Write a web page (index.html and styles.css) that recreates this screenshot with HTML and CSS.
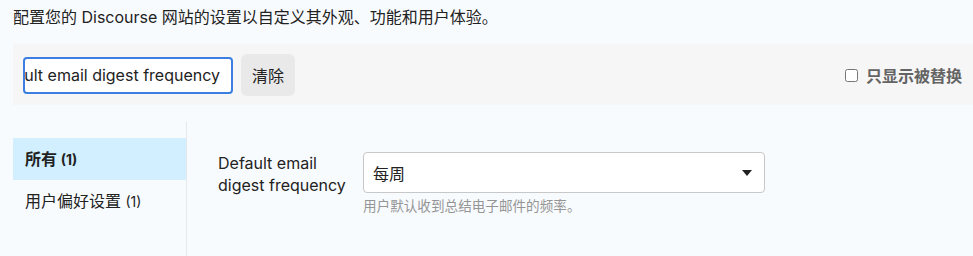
FILE: index.html
```html
<!DOCTYPE html>
<html lang="zh-CN">
<head>
<meta charset="utf-8">
<title>设置</title>
<link rel="stylesheet" href="styles.css">
</head>
<body>
<div class="page">
  <p class="intro">配置您的 Discourse 网站的设置以自定义其外观、功能和用户体验。</p>
  <div class="filter-bar">
    <div class="search-input"><span>Default email digest frequency</span></div>
    <button class="clear-btn" type="button">清除</button>
    <label class="overridden">
      <input type="checkbox">
      <span>只显示被替换</span>
    </label>
  </div>
  <div class="settings">
    <nav class="side-nav">
      <a class="nav-item active">所有 <span class="count">(1)</span></a>
      <a class="nav-item">用户偏好设置 <span class="count">(1)</span></a>
    </nav>
    <div class="content">
      <div class="setting-row">
        <div class="setting-label">Default email digest frequency</div>
        <div class="setting-value">
          <div class="select-box">
            <span>每周</span>
            <svg class="caret" width="10" height="6" viewBox="0 0 10 6"><path d="M0 0H10L5 6Z" fill="#222"/></svg>
          </div>
          <div class="desc">用户默认收到总结电子邮件的频率。</div>
        </div>
      </div>
    </div>
  </div>
</div>
</body>
</html>
```

FILE: styles.css
```css
html, body {
  margin: 0;
  padding: 0;
  background: #f8fbfe;
}
body {
  font-family: Inter, "Noto Sans CJK SC", sans-serif;
  color: #222;
  font-size: 16px;
}
.page {
  padding-left: 13px;
}
.intro {
  margin: 6px 0 0;
  line-height: 22px;
  font-size: 16px;
  color: #222;
}
.filter-bar {
  margin-top: 16px;
  height: 61px;
  box-sizing: border-box;
  background: #f6f6f6;
  display: flex;
  align-items: center;
  padding: 1px 11px 0 10px;
}
.search-input {
  width: 210px;
  height: 37px;
  box-sizing: border-box;
  border: 2px solid #3d7fe0;
  border-radius: 4px;
  background: #fff;
  display: flex;
  align-items: center;
  justify-content: flex-end;
  overflow: hidden;
  white-space: nowrap;
  padding-right: 11px;
  font-size: 16px;
  color: #222;
}
.search-input span {
  flex-shrink: 0;
}
.clear-btn {
  margin-left: 8px;
  width: 54px;
  height: 42px;
  border: none;
  border-radius: 6px;
  background: #e9e9e9;
  font-family: Inter, "Noto Sans CJK SC", sans-serif;
  font-size: 16px;
  color: #222;
  padding: 0;
}
.overridden {
  margin-left: auto;
  display: flex;
  align-items: center;
  font-weight: 700;
  color: #646464;
  font-size: 16px;
}
.overridden input {
  margin: 0 8px 0 0;
  width: 13px;
  height: 13px;
}
.settings {
  margin-top: 17px;
  display: flex;
  min-height: 140px;
}
.side-nav {
  width: 173px;
  border-right: 1px solid #e6e9ec;
  padding-top: 16px;
  display: flex;
  flex-direction: column;
}
.nav-item {
  display: block;
  height: 42px;
  line-height: 42px;
  padding-left: 12px;
  font-size: 16px;
  color: #222;
}
.nav-item .count {
  font-size: 14px;
}
.nav-item.active {
  background: #d1efff;
  font-weight: 700;
}
.content {
  padding: 30px 0 0 31px;
}
.setting-row {
  display: flex;
  align-items: flex-start;
}
.setting-label {
  width: 135px;
  margin-right: 10px;
  line-height: 22px;
  font-size: 16px;
  color: #222;
}
.select-box {
  width: 402px;
  height: 41px;
  box-sizing: border-box;
  border: 1px solid #c8c8c8;
  border-radius: 4px;
  background: #fff;
  display: flex;
  align-items: center;
  justify-content: space-between;
  padding: 0 12px 0 9px;
  font-size: 16px;
  color: #222;
}
.caret {
  display: block;
}
.desc {
  margin-top: 4px;
  font-size: 13.6px;
  line-height: 18px;
  color: #959595;
}
```
